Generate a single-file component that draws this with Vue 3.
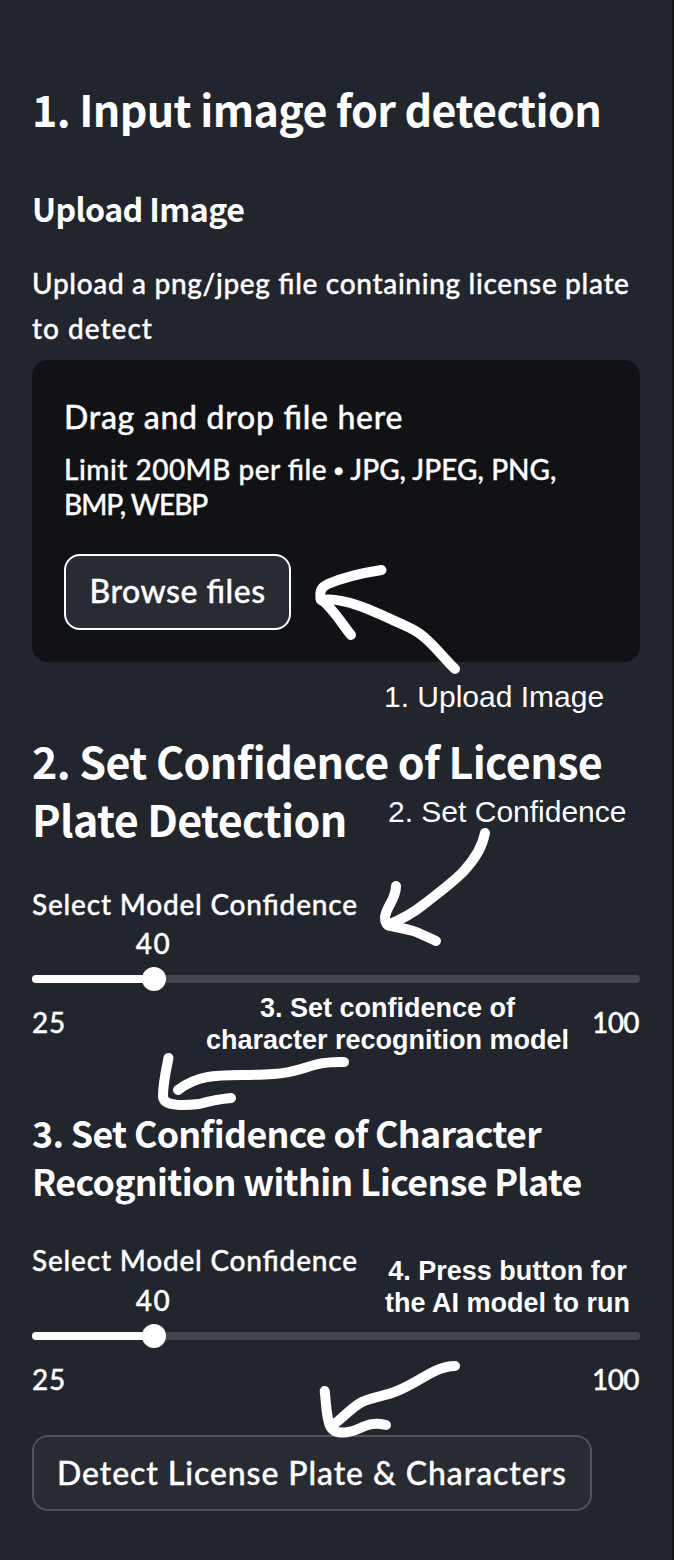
<script setup>
const sliders = {
  plate: { label: 'Select Model Confidence', min: 25, max: 100, value: 40 },
  chars: { label: 'Select Model Confidence', min: 25, max: 100, value: 40 },
}
const percent = (s) => ((s.value - s.min) / (s.max - s.min)) * 100 + '%'
</script>

<template>
  <main class="panel">
    <h1 class="title">1. Input image for detection</h1>
    <h3 class="subtitle">Upload Image</h3>
    <p class="hint">Upload a png/jpeg file containing license plate<br /><span class="hint-b">to detect</span></p>

    <section class="dropzone">
      <div class="drop-title">Drag and drop file here</div>
      <div class="drop-limit">Limit 200MB per file <span class="bullet">•</span> <span class="types">JPG, JPEG, PNG,</span><br /><span class="types-b">BMP, WEBP</span></div>
      <button class="btn browse">Browse files</button>
    </section>

    <h1 class="title second">2. Set Confidence of License<br />Plate Detection</h1>

    <div class="slider">
      <div class="label">{{ sliders.plate.label }}</div>
      <div class="value-row"><span class="value" :style="{ left: percent(sliders.plate) }">{{ sliders.plate.value }}</span></div>
      <div class="track">
        <div class="fill" :style="{ width: percent(sliders.plate) }"><i class="thumb"></i></div>
      </div>
      <div class="ticks"><span class="min">{{ sliders.plate.min }}</span><span class="max">{{ sliders.plate.max }}</span></div>
    </div>

    <h2 class="heading">3. Set Confidence of Character<br />Recognition within License Plate</h2>

    <div class="slider">
      <div class="label">{{ sliders.chars.label }}</div>
      <div class="value-row"><span class="value" :style="{ left: percent(sliders.chars) }">{{ sliders.chars.value }}</span></div>
      <div class="track">
        <div class="fill" :style="{ width: percent(sliders.chars) }"><i class="thumb"></i></div>
      </div>
      <div class="ticks"><span class="min">{{ sliders.chars.min }}</span><span class="max">{{ sliders.chars.max }}</span></div>
    </div>

    <button class="btn detect">Detect License Plate &amp; Characters</button>

    <!-- hand-drawn guide arrows and captions laid over the form -->
    <svg class="arrows" viewBox="0 0 674 1560" width="674" height="1560">
      <path d="M381.5 570 C362 573 344 577 328 584 C319 588 320 594 320.5 599 C333 608 342 624 351 635" />
      <path d="M321 600 C345 596 378 613 412 629 C428 637 440 654 455 669" />
      <path d="M485 833 C482 848 475 859 463 872 C451 884 437 894 423 905 C412 914 402 919 388 925" />
      <path d="M396 886 C396 900 385 908 385 918 C385 923 387 926 391 926 C417 931 414 931 436 941" />
      <path d="M344 1062 C309 1061 306 1072 273 1074 C230 1077 203 1070 178 1090" />
      <path d="M168.500 1058 C166 1070 163 1083 163 1096 C163 1108 190 1105 199 1104 C210 1101 220 1099 231 1098" />
      <path d="M455 1366 C435 1366 420 1382 397 1391 C385 1396 373 1397 362 1402 C352 1407 344 1417 333 1425" />
      <path d="M324.700 1391 C326 1401 326 1413 329 1423 C331 1431 337 1433 345 1432.500 C362 1431 366 1420 386 1425" />
    </svg>
    <div class="note note-1">1. Upload Image</div>
    <div class="note note-2">2. Set Confidence</div>
    <div class="note bold note-3">3. Set confidence of<br />character recognition model</div>
    <div class="note bold note-4">4. Press button for<br />the AI model to run</div>
  </main>
</template>

<style>
html,
body {
  background: #21252d;
}
</style>

<style scoped>
.panel {
  position: relative;
  box-sizing: border-box;
  width: 674px;
  height: 1560px;
  padding: 80px 32px 0;
  overflow: hidden;
  border-right: 2px solid #14161a;
  background: #21252d;
  color: #fff;
  font-family: Lato, "Open Sans", sans-serif;
  font-size: 28px;
  font-weight: 500;
  font-feature-settings: "liga" 1;
}
h1,
h2,
h3,
p {
  margin: 0;
}
.title,
.subtitle,
.heading {
  font-family: "Noto Sans CJK JP", "Noto Sans", sans-serif;
  font-weight: 700;
  white-space: nowrap;
}
.hint,
.dropzone,
.slider,
.btn {
  -webkit-text-stroke: 0.35px #fff;
}
.title {
  font-size: 43px;
  line-height: 57.6px;
  letter-spacing: -0.62px;
}
.subtitle {
  margin-top: 49.4px;
  font-size: 32.2px;
  line-height: 43.2px;
  letter-spacing: -0.62px;
}
.hint {
  margin-top: 31px;
  line-height: 44.8px;
  letter-spacing: 0.67px;
  white-space: nowrap;
}
.hint-b {
  letter-spacing: 1px;
}
.dropzone {
  box-sizing: border-box;
  width: 608px;
  height: 302px;
  margin-top: 9.2px;
  padding: 32px;
  border-radius: 16px;
  background: #111216;
  white-space: nowrap;
}
.drop-title {
  font-size: 32px;
  line-height: 49px;
  letter-spacing: 0.7px;
}
.drop-limit {
  margin-top: 11px;
  line-height: 35px;
  letter-spacing: 0.5px;
}
.bullet {
  display: inline-block;
  width: 9px;
  margin-left: -1px;
  font-family: "Liberation Sans", sans-serif;
  font-size: 28px;
  letter-spacing: 0;
  line-height: 24px;
}
.types {
  letter-spacing: 0.05px;
}
.types-b {
  letter-spacing: -0.98px;
}
.btn {
  display: block;
  box-sizing: border-box;
  height: 76px;
  padding: 0;
  border: 2px solid #50535b;
  border-radius: 16px;
  background: #272b33;
  color: #fff;
  font: 500 32px/70px Lato, "Open Sans", sans-serif;
  font-feature-settings: "liga" 1;
  letter-spacing: 0.92px;
  white-space: nowrap;
}
.browse {
  width: 227px;
  margin-top: 32px;
  padding-bottom: 2px;
  border-color: #fff;
  letter-spacing: 0.5px;
}
.second {
  margin-top: 70.5px;
}
.slider {
  margin-top: 34px;
}
.label {
  line-height: 44.8px;
  letter-spacing: 0.8px;
}
.value-row {
  position: relative;
  height: 35px;
  line-height: 35px;
}
.value {
  position: absolute;
  transform: translateX(-50%);
  letter-spacing: 1.5px;
}
.track {
  width: 608px;
  height: 8px;
  margin-top: 14px;
  border-radius: 4px;
  background: #444751;
}
.fill {
  display: flex;
  align-items: center;
  justify-content: flex-end;
  height: 8px;
  border-radius: 4px;
  background: #fff;
}
.thumb {
  flex: none;
  width: 24px;
  height: 24px;
  margin-right: -12px;
  border-radius: 50%;
  background: #fff;
}
.ticks {
  display: flex;
  justify-content: space-between;
  width: 608px;
  margin-top: 22px;
  line-height: 35px;
}
.min {
  letter-spacing: 0.7px;
}
.max {
  margin-right: 1px;
  letter-spacing: -0.6px;
}
.heading {
  margin-top: 67.5px;
  font-size: 35.8px;
  line-height: 48px;
  letter-spacing: -0.7px;
}
.detect {
  width: 560px;
  margin-top: 38px;
}
.arrows {
  position: absolute;
  top: 0;
  left: 0;
  fill: none;
  stroke: #fff;
  stroke-width: 10;
  stroke-linecap: round;
  stroke-linejoin: round;
}
.note {
  position: absolute;
  font-family: "Liberation Sans", Arial, sans-serif;
  font-size: 30px;
  font-weight: 400;
  line-height: 34px;
  text-align: center;
  white-space: nowrap;
}
.bold {
  font-size: 27px;
  font-weight: 700;
  line-height: 32px;
}
.note-1 {
  top: 680px;
  left: 384px;
}
.note-2 {
  top: 795px;
  left: 388px;
}
.note-3 {
  top: 992px;
  left: 206px;
}
.note-4 {
  top: 1255px;
  left: 385px;
}
</style>
